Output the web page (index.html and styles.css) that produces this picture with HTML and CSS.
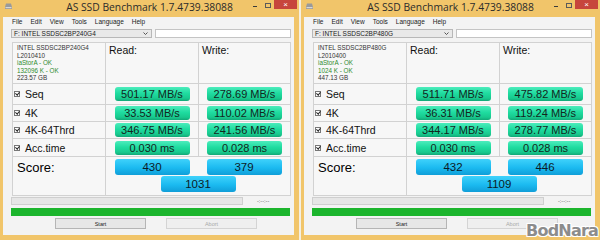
FILE: index.html
```html
<!DOCTYPE html>
<html lang="en">
<head>
    <meta charset="UTF-8">
    <title>AS SSD Benchmark</title>
    <link rel="stylesheet" href="styles.css">
</head>
<body>

<div class="desktop">

    <!-- Left window: SSDSC2BP240G4 -->
    <div class="window">
        <div class="titlebar">
            <svg class="app-icon" width="7" height="6" viewBox="0 0 7 6"><path d="M1 0.5h5l1 3.5v2h-7v-2z" fill="#9a9a9a"/><rect x="0.5" y="4" width="6" height="1.2" fill="#d8d8d8"/></svg>
            <span class="title">AS SSD Benchmark 1.7.4739.38088</span>
            <div class="controls">
                <span class="min"></span>
                <span class="max"></span>
                <span class="close">&times;</span>
            </div>
        </div>
        <div class="client">
            <ul class="menu">
                <li>File</li><li>Edit</li><li>View</li><li>Tools</li><li>Language</li><li>Help</li>
            </ul>
            <div class="pickers">
                <div class="combo">
                    <span>F: INTEL SSDSC2BP240G4</span>
                    <svg width="5" height="3" viewBox="0 0 5 3"><path d="M0.5 0.5l2 2 2-2" fill="none" stroke="#444" stroke-width="0.9"/></svg>
                </div>
                <div class="textbox"></div>
            </div>
            <div class="panel">
                <div class="cell info">
                    <span>INTEL SSDSC2BP240G4</span>
                    <span>L2010410</span>
                    <span class="ok">iaStorA - OK</span>
                    <span class="ok">132096 K - OK</span>
                    <span>223.57 GB</span>
                </div>
                <div class="cell head">Read:</div>
                <div class="cell head">Write:</div>

                <div class="cell label"><span class="check"></span>Seq</div>
                <div class="cell val"><span class="box">501.17 MB/s</span></div>
                <div class="cell val"><span class="box">278.69 MB/s</span></div>

                <div class="cell label"><span class="check"></span>4K</div>
                <div class="cell val"><span class="box">33.53 MB/s</span></div>
                <div class="cell val"><span class="box">110.02 MB/s</span></div>

                <div class="cell label"><span class="check"></span>4K-64Thrd</div>
                <div class="cell val"><span class="box">346.75 MB/s</span></div>
                <div class="cell val"><span class="box">241.56 MB/s</span></div>

                <div class="cell label"><span class="check"></span>Acc.time</div>
                <div class="cell val"><span class="box">0.030 ms</span></div>
                <div class="cell val"><span class="box">0.028 ms</span></div>

                <div class="cell score-label">Score:</div>
                <div class="cell scores">
                    <div class="score-pair">
                        <span class="sbox">430</span>
                        <span class="sbox">379</span>
                    </div>
                    <span class="sbox">1031</span>
                </div>
            </div>
            <div class="progress-row">
                <div class="progress"></div>
                <span class="eta">-:--:--</span>
            </div>
            <div class="donebar"></div>
            <div class="buttons">
                <button>Start</button>
                <button disabled>Abort</button>
            </div>
        </div>
    </div>

    <!-- Right window: SSDSC2BP480G -->
    <div class="window">
        <div class="titlebar">
            <svg class="app-icon" width="7" height="6" viewBox="0 0 7 6"><path d="M1 0.5h5l1 3.5v2h-7v-2z" fill="#9a9a9a"/><rect x="0.5" y="4" width="6" height="1.2" fill="#d8d8d8"/></svg>
            <span class="title">AS SSD Benchmark 1.7.4739.38088</span>
            <div class="controls">
                <span class="min"></span>
                <span class="max"></span>
                <span class="close">&times;</span>
            </div>
        </div>
        <div class="client">
            <ul class="menu">
                <li>File</li><li>Edit</li><li>View</li><li>Tools</li><li>Language</li><li>Help</li>
            </ul>
            <div class="pickers">
                <div class="combo">
                    <span>F: INTEL SSDSC2BP480G</span>
                    <svg width="5" height="3" viewBox="0 0 5 3"><path d="M0.5 0.5l2 2 2-2" fill="none" stroke="#444" stroke-width="0.9"/></svg>
                </div>
                <div class="textbox"></div>
            </div>
            <div class="panel">
                <div class="cell info">
                    <span>INTEL SSDSC2BP480G</span>
                    <span>L2010400</span>
                    <span class="ok">iaStorA - OK</span>
                    <span class="ok">1024 K - OK</span>
                    <span>447.13 GB</span>
                </div>
                <div class="cell head">Read:</div>
                <div class="cell head">Write:</div>

                <div class="cell label"><span class="check"></span>Seq</div>
                <div class="cell val"><span class="box">511.71 MB/s</span></div>
                <div class="cell val"><span class="box">475.82 MB/s</span></div>

                <div class="cell label"><span class="check"></span>4K</div>
                <div class="cell val"><span class="box">36.31 MB/s</span></div>
                <div class="cell val"><span class="box">119.24 MB/s</span></div>

                <div class="cell label"><span class="check"></span>4K-64Thrd</div>
                <div class="cell val"><span class="box">344.17 MB/s</span></div>
                <div class="cell val"><span class="box">278.77 MB/s</span></div>

                <div class="cell label"><span class="check"></span>Acc.time</div>
                <div class="cell val"><span class="box">0.030 ms</span></div>
                <div class="cell val"><span class="box">0.028 ms</span></div>

                <div class="cell score-label">Score:</div>
                <div class="cell scores">
                    <div class="score-pair">
                        <span class="sbox">432</span>
                        <span class="sbox">446</span>
                    </div>
                    <span class="sbox">1109</span>
                </div>
            </div>
            <div class="progress-row">
                <div class="progress"></div>
                <span class="eta">-:--:--</span>
            </div>
            <div class="donebar"></div>
            <div class="buttons">
                <button>Start</button>
                <button disabled>Abort</button>
            </div>
        </div>
        <!-- site watermark over the corner -->
        <span class="watermark">BodNara</span>
    </div>

</div>

</body>
</html>
```

FILE: styles.css
```css
body {
    margin: 0;
    background: #f4efe2;
    font-family: "Liberation Sans", Arial, sans-serif;
}

.desktop {
    display: flex;
    justify-content: space-between;
    width: 600px;
    height: 240px;
}

.window {
    position: relative;
    width: 299px;
    height: 240px;
    background: #f1c56a;
    display: flex;
    flex-direction: column;
}

/* Title bar */
.titlebar {
    height: 17px;
    display: grid;
    grid-template-columns: 1fr auto 1fr;
    align-items: start;
}

.app-icon {
    margin: 3px 0 0 5px;
}

.title {
    font-family: "Open Sans", "Liberation Sans", sans-serif;
    font-size: 10.3px;
    line-height: 15px;
    color: #2b2b2b;
}

.controls {
    display: flex;
    justify-content: flex-end;
    align-items: flex-start;
    padding-right: 2px;
}

.min {
    width: 4px;
    height: 1px;
    background: #3a3a3a;
    margin: 6px 8px 0 0;
}

.max {
    width: 4px;
    height: 3px;
    border: 1px solid #5a5a5a;
    margin: 3px 3px 0 0;
}

.close {
    width: 23px;
    height: 9px;
    background: #c7453c;
    color: #fff;
    font-size: 8px;
    line-height: 9px;
    text-align: center;
}

/* Client area */
.client {
    flex: 1;
    margin: 0 5px 5px 3px;
    padding: 0 3px 0 8px;
    background: #f3f3f3;
    display: flex;
    flex-direction: column;
}

.menu {
    list-style: none;
    margin: 0;
    padding: 0 0 0 1px;
    height: 10px;
    display: flex;
    gap: 8px;
    font-size: 6.5px;
    line-height: 10px;
    color: #222;
}

.pickers {
    display: flex;
    gap: 3px;
    margin-top: 2px;
    height: 9px;
}

.combo {
    width: 141px;
    border: 1px solid #b8b8b8;
    background: #e9e9e9;
    display: flex;
    justify-content: space-between;
    align-items: center;
    padding: 0 3px 0 2px;
    box-sizing: border-box;
    font-size: 6.5px;
    color: #222;
}

.textbox {
    flex: 1;
    border: 1px solid #c4c4c4;
    background: #fff;
}

/* Result grid */
.panel {
    margin: 4px 0 0 1px;
    width: 279px;
    box-sizing: border-box;
    display: grid;
    grid-template-columns: 92px 92px 91px;
    grid-template-rows: 40px 20px 16px 16px 17px 38px;
    gap: 1px;
    border: 1px solid #d2d2d2;
    background: #d2d2d2;
}

.cell {
    background: #f7f7f7;
}

.info {
    display: flex;
    flex-direction: column;
    padding: 1px 0 0 4px;
    font-size: 6.3px;
    line-height: 7.5px;
    color: #333;
}

.info .ok {
    color: #2e8b2e;
}

.head {
    padding: 1px 0 0 3px;
    font-size: 10.5px;
    color: #111;
}

.label {
    display: flex;
    align-items: center;
    gap: 5px;
    padding-left: 1px;
    font-size: 10.5px;
    color: #111;
}

.check {
    width: 4px;
    height: 4px;
    border: 1px solid #777;
    background: #fff;
    position: relative;
}

.check::after {
    content: "";
    position: absolute;
    left: 1px;
    top: -1px;
    width: 1.5px;
    height: 3px;
    border: solid #222;
    border-width: 0 1px 1px 0;
    transform: rotate(40deg);
}

.val {
    display: flex;
    justify-content: center;
    align-items: center;
}

.box {
    width: 75px;
    height: 14px;
    border-radius: 3px;
    background: linear-gradient(#4cecbc, #1fdca0 45%, #18c98e 80%, #12a877);
    text-align: center;
    font-size: 11px;
    line-height: 14px;
    color: #13261d;
}

.score-label {
    padding: 3px 0 0 4px;
    font-size: 13px;
}

.scores {
    grid-column: span 2;
    display: flex;
    flex-direction: column;
    align-items: center;
    padding-top: 2px;
    gap: 1px;
}

.score-pair {
    align-self: stretch;
    display: grid;
    grid-template-columns: 1fr 1fr;
    justify-items: center;
}

.sbox {
    width: 75px;
    height: 16px;
    border-radius: 3px;
    background: linear-gradient(#3fd2fb, #1bbaf0 55%, #109ed8);
    text-align: center;
    font-size: 11.5px;
    line-height: 16px;
    color: #0c1b26;
}

/* Progress and buttons */
.progress-row {
    display: flex;
    align-items: center;
    margin-top: 1px;
    height: 8px;
}

.progress {
    width: 230px;
    height: 6px;
    border: 1px solid #cfcfcf;
    background: #e6e6e6;
}

.eta {
    margin-left: 14px;
    font-size: 5.5px;
    color: #555;
}

.donebar {
    margin-top: 3px;
    width: 279px;
    height: 8px;
    background: #1cb52d;
}

.buttons {
    display: flex;
    gap: 20px;
    margin-top: 2px;
    padding-left: 44px;
}

button {
    width: 91px;
    height: 11px;
    padding: 0;
    border: 1px solid #b5b5b5;
    background: #e7e7e7;
    font-family: "Liberation Sans", Arial, sans-serif;
    font-size: 5.5px;
    color: #222;
}

button:disabled {
    background: #efefef;
    border-color: #d4d4d4;
    color: #aaa;
}

.watermark {
    position: absolute;
    right: 2px;
    bottom: 0;
    font-family: "DejaVu Sans", sans-serif;
    font-weight: bold;
    font-size: 16px;
    line-height: 18px;
    letter-spacing: -0.8px;
    color: #8c8c8c;
    text-shadow: 1px 1px 0 #fff, -1px -1px 0 #fff, 1px -1px 0 #fff, -1px 1px 0 #fff;
}
```
